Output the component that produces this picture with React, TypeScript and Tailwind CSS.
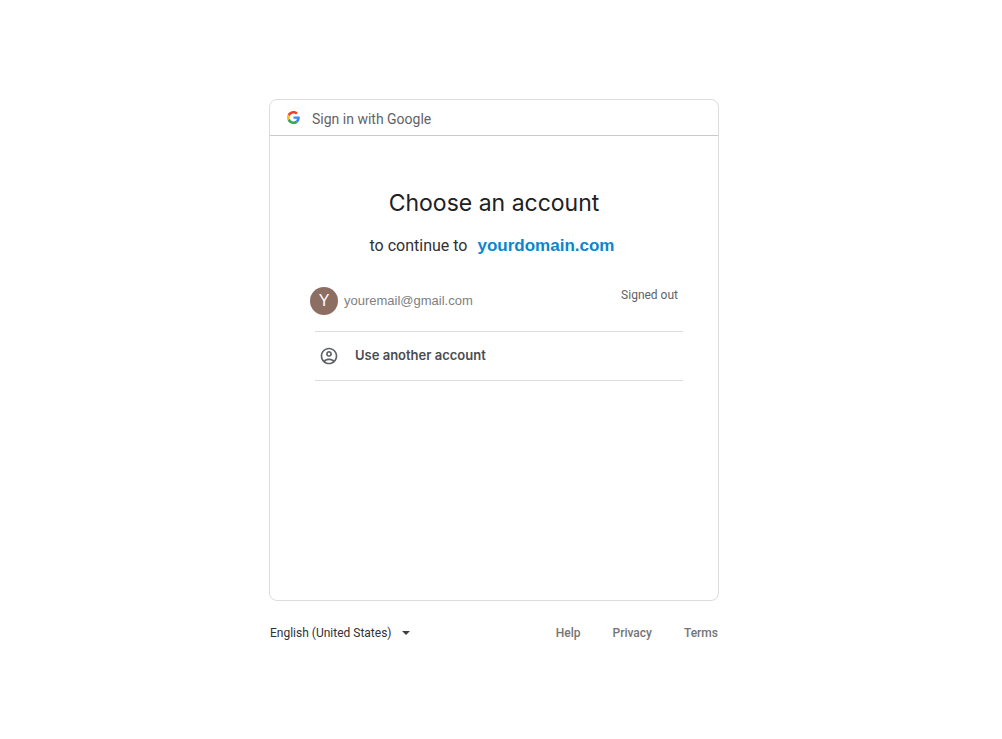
import React from 'react';

const footerLinks = ['Help', 'Privacy', 'Terms'];

const GoogleLogo: React.FC = () => (
  <svg className="h-[13px] w-[13px]" viewBox="0 0 48 48" aria-hidden="true">
    <path fill="#EA4335" d="M24 9.5c3.54 0 6.71 1.22 9.21 3.6l6.85-6.85C35.9 2.38 30.47 0 24 0 14.62 0 6.51 5.38 2.56 13.22l7.98 6.19C12.43 13.72 17.74 9.5 24 9.5z" />
    <path fill="#4285F4" d="M46.98 24.55c0-1.57-.15-3.09-.38-4.55H24v9.02h12.94c-.58 2.96-2.26 5.48-4.78 7.18l7.73 6c4.51-4.18 7.09-10.36 7.09-17.65z" />
    <path fill="#FBBC05" d="M10.53 28.59c-.48-1.45-.76-2.99-.76-4.59s.27-3.14.76-4.59l-7.98-6.19C.92 16.46 0 20.12 0 24c0 3.88.92 7.54 2.56 10.78l7.97-6.19z" />
    <path fill="#34A853" d="M24 48c6.48 0 11.93-2.13 15.89-5.81l-7.73-6c-2.15 1.45-4.92 2.3-8.16 2.3-6.26 0-11.57-4.22-13.47-9.91l-7.98 6.19C6.51 42.62 14.62 48 24 48z" />
  </svg>
);

const AccountIcon: React.FC = () => (
  <svg className="h-5 w-5 fill-[#5f6368]" viewBox="0 0 24 24" aria-hidden="true">
    <path d="M12 2C6.48 2 2 6.48 2 12s4.48 10 10 10 10-4.48 10-10S17.52 2 12 2zM7.35 18.5C8.66 17.56 10.26 17 12 17s3.34.56 4.65 1.5C15.34 19.44 13.74 20 12 20s-3.34-.56-4.65-1.5zm10.79-1.38C16.45 15.8 14.32 15 12 15s-4.45.8-6.14 2.12C4.7 15.73 4 13.95 4 12c0-4.42 3.58-8 8-8s8 3.58 8 8c0 1.95-.7 3.73-1.86 5.12z" />
    <path d="M12 6c-1.93 0-3.5 1.57-3.5 3.5S10.07 13 12 13s3.5-1.57 3.5-3.5S13.93 6 12 6zm0 5c-.83 0-1.5-.67-1.5-1.5S11.17 8 12 8s1.5.67 1.5 1.5S12.83 11 12 11z" />
  </svg>
);

const App: React.FC = () => {
  return (
    <div className="min-h-screen bg-white pt-[99px] pr-[14px] font-[Roboto,sans-serif]">
      <div className="mx-auto w-full max-w-[450px]">
        <main className="rounded-lg border border-[#dadce0] pb-[219px]">
          <header className="flex h-9 items-center gap-3 border-b border-[#c8cacd] pr-4 pl-[17px] text-sm text-[#5f6368]">
            <GoogleLogo />
            <span className="pt-0.5">Sign in with Google</span>
          </header>

          <h1 className="mt-[51px] text-center font-[Inter,sans-serif] text-[23px] leading-8 text-[#202124]">
            Choose an account
          </h1>
          <p className="mt-[15px] flex items-center justify-center gap-2.5 pr-1 text-base text-[#303134]">
            to continue to
            <a href="#" className="font-['Liberation_Sans',sans-serif] text-[17px] leading-6 font-bold text-[#0b85d0]">
              yourdomain.com
            </a>
          </p>

          <button type="button" className="mt-[29px] flex w-full items-center gap-1.5 px-10 text-left">
            <span className="flex h-7 w-7 items-center justify-center rounded-full bg-[#8d6e63] font-['Liberation_Sans',sans-serif] text-base text-white">
              Y
            </span>
            <span className="font-['Liberation_Sans',sans-serif] text-[13px] text-[#808080]">
              youremail@gmail.com
            </span>
            <span className="ml-auto self-start text-xs text-[#5f6368]">Signed out</span>
          </button>

          <div className="mt-4 pr-[35px] pl-[45px]">
            <button
              type="button"
              className="flex h-[50px] w-full items-center gap-4 border-y border-[#dadce0] px-1 text-left font-[Inter,sans-serif] text-[13px] font-semibold text-[#4a4d51]"
            >
              <AccountIcon />
              Use another account
            </button>
          </div>
        </main>

        <footer className="mt-6 flex items-center justify-between text-xs">
          <label className="relative flex items-center text-[#303134]">
            <select aria-label="Language" className="appearance-none bg-transparent pr-[18px] pl-px">
              <option>English (United States)</option>
            </select>
            <svg className="pointer-events-none absolute right-0 h-1 w-2 fill-[#3c4043]" viewBox="0 0 8 4" aria-hidden="true">
              <path d="M0 0h8L4 4z" />
            </svg>
          </label>
          <nav className="flex gap-8 pr-px font-medium text-[#757575]">
            {footerLinks.map((link) => (
              <a key={link} href="#">{link}</a>
            ))}
          </nav>
        </footer>
      </div>
    </div>
  );
};

export default App;
